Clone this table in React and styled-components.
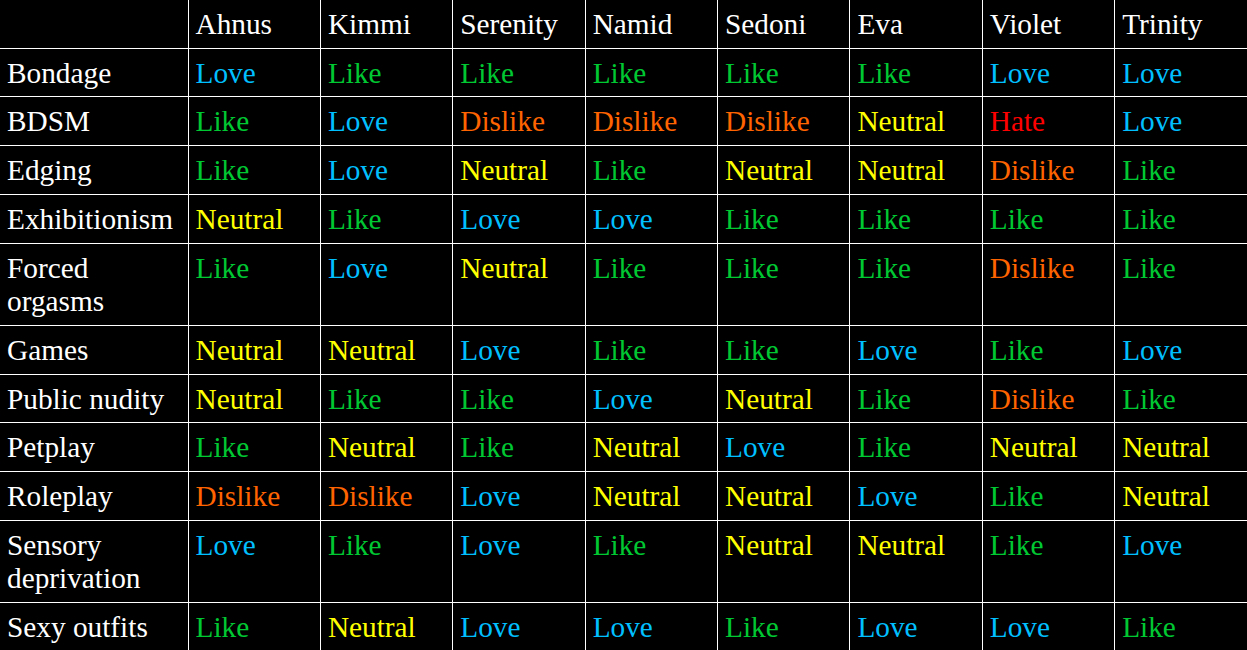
import styled, { createGlobalStyle } from "styled-components";

const GlobalStyle = createGlobalStyle`
  html, body {
    margin: 0;
    padding: 0;
    background: #000;
    font-family: "Liberation Serif", "Times New Roman", serif;
  }
`;

const COLORS = {
  Love: "#00bfff",
  Like: "#00c832",
  Neutral: "#ffff00",
  Dislike: "#ff6400",
  Hate: "#ff0000",
};

const names = ["Ahnus", "Kimmi", "Serenity", "Namid", "Sedoni", "Eva", "Violet", "Trinity"];

const rows = [
  ["Bondage", ["Love", "Like", "Like", "Like", "Like", "Like", "Love", "Love"]],
  ["BDSM", ["Like", "Love", "Dislike", "Dislike", "Dislike", "Neutral", "Hate", "Love"]],
  ["Edging", ["Like", "Love", "Neutral", "Like", "Neutral", "Neutral", "Dislike", "Like"]],
  ["Exhibitionism", ["Neutral", "Like", "Love", "Love", "Like", "Like", "Like", "Like"]],
  ["Forced orgasms", ["Like", "Love", "Neutral", "Like", "Like", "Like", "Dislike", "Like"]],
  ["Games", ["Neutral", "Neutral", "Love", "Like", "Like", "Love", "Like", "Love"]],
  ["Public nudity", ["Neutral", "Like", "Like", "Love", "Neutral", "Like", "Dislike", "Like"]],
  ["Petplay", ["Like", "Neutral", "Like", "Neutral", "Love", "Like", "Neutral", "Neutral"]],
  ["Roleplay", ["Dislike", "Dislike", "Love", "Neutral", "Neutral", "Love", "Like", "Neutral"]],
  ["Sensory deprivation", ["Love", "Like", "Love", "Like", "Neutral", "Neutral", "Like", "Love"]],
  ["Sexy outfits", ["Like", "Neutral", "Love", "Love", "Like", "Love", "Love", "Like"]],
];

function App() {
  return (
    <>
      <GlobalStyle />
      <Table>
        <colgroup>
          <col style={{ width: 188 }} />
          {names.map((n) => (
            <col key={n} />
          ))}
        </colgroup>
        <thead>
          <tr>
            <Cell as="th" />
            {names.map((n) => (
              <Cell as="th" key={n}>
                {n}
              </Cell>
            ))}
          </tr>
        </thead>
        <tbody>
          {rows.map(([kink, values]) => (
            <tr key={kink}>
              <Cell>{kink}</Cell>
              {values.map((v, i) => (
                <Cell key={i} $tone={COLORS[v]}>
                  {v}
                </Cell>
              ))}
            </tr>
          ))}
        </tbody>
      </Table>
    </>
  );
}

const Table = styled.table`
  width: 1247px;
  table-layout: fixed;
  border-collapse: collapse;
  border-style: hidden;
  background: #000;
`;

const Cell = styled.td`
  border: 1px solid #fff;
  padding: 8px 6px 6px 7px;
  font-family: "Liberation Serif", "Times New Roman", serif;
  font-size: 29.3px;
  line-height: 33.7px;
  text-align: left;
  vertical-align: top;
  font-weight: normal;
  color: ${({ $tone }) => $tone || "#fff"};
`;

export default App;
